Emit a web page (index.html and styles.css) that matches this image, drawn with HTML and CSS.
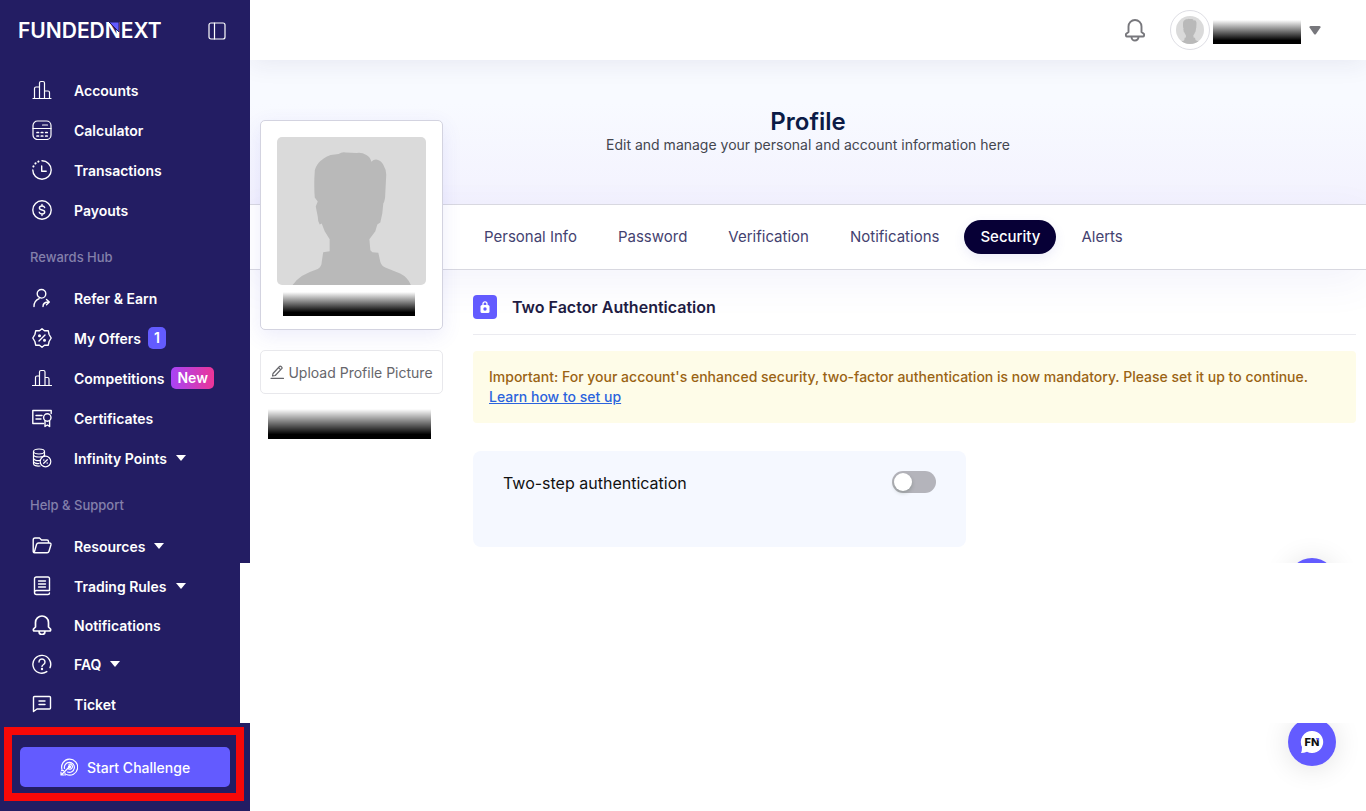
FILE: index.html
```
<!DOCTYPE html>
<html lang="en">

<head>
    <meta charset="UTF-8">
    <meta name="viewport" content="width=device-width, initial-scale=1.0">
    <title>Profile - FundedNext</title>
    <link rel="stylesheet" href="styles.css">
</head>

<body>

    <div class="layout">
        <aside class="sidebar">
            <div class="brand">
                <a href="#" class="logo">
                    <svg width="148" height="28" viewBox="0 0 148 28">
                        <text x="0" y="21" class="logo-text">FUNDEDNEXT</text>
                        <path d="M91 5h10v10z" fill="#635bff" stroke="#231d63" stroke-width="1" />
                    </svg>
                </a>
                <button class="collapse" aria-label="Collapse menu">
                    <svg width="18" height="18" viewBox="0 0 18 18" class="icon thin"><rect x="1" y="1" width="16" height="16" rx="2" /><path d="M6.500 1v16" /></svg>
                </button>
            </div>

            <nav class="menu">
                <a href="#" class="menu-item">
                    <svg class="icon thin" viewBox="0 0 20 20"><path d="M1 18.500h18M2.500 18.500V8.500q0-1.500 1.500-1.500h3.500M7.500 18.500V3q0-1.500 1.500-1.500h2q1.500 0 1.500 1.500v15.500M12.500 11H16q1.500 0 1.500 1.500v6" /></svg>
                    <span>Accounts</span>
                </a>
                <a href="#" class="menu-item">
                    <svg class="icon thin" viewBox="0 0 20 20"><rect x="1" y="1" width="18" height="18.500" rx="4.500" /><path d="M1 8.500h18M10.500 5h5" /><path d="M5 12.500h1.500M9.300 12.500h1.500M13.700 12.500h1.500M5 16h1.500M9.300 16h1.500M13.700 16h1.500" stroke-width="1.700" /></svg>
                    <span>Calculator</span>
                </a>
                <a href="#" class="menu-item">
                    <svg class="icon" viewBox="0 0 20 20"><path d="M10 .8a9.200 9.200 0 1 1-9.200 9.200M9.700 6v5.300h4.500" /><path d="M1.400 6.500l.1-.2M3.400 3.500l.2-.2M6.300 1.600l.2-.1" stroke-width="2" /></svg>
                    <span>Transactions</span>
                </a>
                <a href="#" class="menu-item">
                    <svg class="icon" viewBox="0 0 20 20"><circle cx="10" cy="10" r="9.200" /><path d="M12.700 7.600C12.300 6.300 11.300 6 10 6 8.500 6 7.400 6.700 7.400 7.900c0 2.900 5.300 1.200 5.300 4.100 0 1.300-1.200 2-2.700 2-1.400 0-2.500-.5-2.800-1.800M10 4.500V6M10 14v1.500" /></svg>
                    <span>Payouts</span>
                </a>

                <h2 class="menu-title">Rewards Hub</h2>
                <a href="#" class="menu-item">
                    <svg class="icon" viewBox="0 0 20 20"><circle cx="9.500" cy="5.800" r="4.300" /><path d="M2 18.500c0-4 1.800-6.500 5.200-7.800M11 18.500c0-3 1.500-4.500 6-4.500M14.500 11.500L17.300 14l-2.800 2.700" /></svg>
                    <span>Refer &amp; Earn</span>
                </a>
                <a href="#" class="menu-item">
                    <svg class="icon" viewBox="0 0 20 20"><path d="M10 .8l2.500 2h3.800l.8 3.700L19.200 10l-2.100 3.500-.8 3.700h-3.800l-2.500 2-2.500-2H3.700l-.8-3.700L.8 10l2.100-3.500.8-3.700h3.800z" /><path d="M13 7l-6 6" /><circle cx="7.500" cy="7.700" r=".8" /><circle cx="12.500" cy="12.300" r=".8" /></svg>
                    <span>My Offers</span>
                    <span class="badge">1</span>
                </a>
                <a href="#" class="menu-item">
                    <svg class="icon thin" viewBox="0 0 20 20"><path d="M.5 17.500h19M3.500 17.500V9.500q0-1.500 1.500-1.500h2.500M7.500 17.500V4q0-1.500 1.500-1.500h2.500q1.500 0 1.500 1.500v13.500M13 9.500h2.500q1.500 0 1.500 1.500v6.500" /></svg>
                    <span>Competitions</span>
                    <span class="badge badge-new">New</span>
                </a>
                <a href="#" class="menu-item">
                    <svg class="icon" viewBox="0 0 20 20"><path d="M11.500 15.500H.8v-13h18.400v3M4 7.500h6M4 11h5" /><circle cx="15.300" cy="9.500" r="3.700" /><path d="M13 12.800v5.700l2.300-1.500 2.300 1.500v-5.700" /></svg>
                    <span>Certificates</span>
                </a>
                <a href="#" class="menu-item">
                    <svg class="icon thin" viewBox="0 0 20 20"><ellipse cx="7" cy="3.500" rx="5.500" ry="2.500" /><path d="M1.500 3.500v3c0 3.300 11 3.300 11 0v-3M1.500 6.500v3.500c0 2.500 4 3 6.500 2.400M12.500 6.500V8M1.500 10v3c0 2 3 2.800 5.500 2.500M1.500 13v2.500c0 2 3 3 6.500 2.500" /><circle cx="13.500" cy="13.500" r="5.300" /><path d="M15.300 11.700l-3.600 3.600M11.800 11.800v.4M15.200 14.800v.4" stroke-width="1.300" /></svg>
                    <span>Infinity Points</span>
                    <i class="caret"></i>
                </a>

                <h2 class="menu-title">Help &amp; Support</h2>
                <a href="#" class="menu-item">
                    <svg class="icon" viewBox="0 0 20 20"><path d="M16.500 7V5.500q0-1.500-1.500-1.500H9.500L7.500 2H3Q1.200 2 1.200 4v11.500q0 1.300 1.300 1.300h12.700q1.300 0 1.700-1.300l2-6.500q.4-2-1.400-2H6.500Q5 7 4.500 8.500l-2.300 8" /></svg>
                    <span>Resources</span>
                    <i class="caret"></i>
                </a>
                <a href="#" class="menu-item">
                    <svg class="icon" viewBox="0 0 20 20"><path d="M17.500 14.500V2.500q0-1.500-1.500-1.500H4.500Q2.500 1 2.500 3v13.500M17.500 14.500h-13a2 2 0 0 0 0 4h11.500q1.500 0 1.500-1.500M6.500 5h7M6.500 8h7M6.500 11h7" /></svg>
                    <span>Trading Rules</span>
                    <i class="caret"></i>
                </a>
                <a href="#" class="menu-item menu-item-short">
                    <svg class="icon bold" viewBox="0 0 20 20"><path d="M3.500 12V7.500a6.500 6.500 0 0 1 13 0V12l2 2q.5 2-1 2h-15q-1.500 0-1-2zM7 16.500a3 3 0 0 0 6 0" /></svg>
                    <span>Notifications</span>
                </a>
                <a href="#" class="menu-item">
                    <svg class="icon" viewBox="0 0 20 20"><path d="M14.800 17.600A8.900 8.900 0 1 1 18 13.700M7 8a3 3 0 1 1 4.600 2.500Q10 11.500 10 12.500" /><circle cx="10" cy="15" r=".5" /></svg>
                    <span>FAQ</span>
                    <i class="caret"></i>
                </a>
                <a href="#" class="menu-item">
                    <svg class="icon" viewBox="0 0 20 20"><path d="M1.500 17.500V3.500q0-1 1-1h15q1 0 1 1v10.500q0 1-1 1H5zM7 7h6M7 10.500h6" /></svg>
                    <span>Ticket</span>
                </a>
            </nav>

            <div class="start">
                <button class="btn-start">
                    <svg width="18" height="18" viewBox="0 0 18 18" class="icon thin"><path d="M2 11.500A8 8 0 1 1 6.500 16.500M4.500 10.500a5 5 0 1 1 3 3.500M9 6.300a2.500 2.500 0 1 1-1 4" /><path d="M9.700 8.500l-8 8M1 14v3h3M1.500 12.500l2 .2M5 15l.3 2" /><circle cx="9.500" cy="8.700" r="1" fill="#fff" /></svg>
                    Start Challenge
                </button>
            </div>
        </aside>

        <div class="page">
            <header class="topbar">
                <button class="bell" aria-label="Notifications">
                    <svg width="22" height="24" viewBox="0 0 22 24" class="icon"><path d="M4.500 14V8.500a6.500 6.500 0 0 1 13 0V14l2.500 2q.5 2.500-1 2.500H3q-1.500 0-1-2.500zM7.500 19a3.500 3.500 0 0 0 7 0" /></svg>
                </button>
                <button class="account" aria-label="Account">
                    <span class="account-pic">
                        <svg width="28" height="28" viewBox="0 0 150 150"><use href="#person" /></svg>
                    </span>
                    <span class="redacted redacted-top"></span>
                    <svg width="12" height="9" viewBox="0 0 12 9"><path d="M1.500 0h9q1.500 0 1 1.500L7 8q-1 1-2 0L.5 1.500Q0 0 1.500 0z" fill="#77777c" /></svg>
                </button>
            </header>

            <main>
                <section class="hero">
                    <h1>Profile</h1>
                    <p>Edit and manage your personal and account information here</p>
                </section>

                <nav class="tabs">
                    <a href="#">Personal Info</a>
                    <a href="#">Password</a>
                    <a href="#">Verification</a>
                    <a href="#">Notifications</a>
                    <a href="#" class="active">Security</a>
                    <a href="#">Alerts</a>
                </nav>

                <div class="content">
                    <div class="profile">
                        <div class="profile-card">
                            <svg class="profile-pic" viewBox="0 0 150 149">
                                <g id="person">
                                    <rect width="150" height="150" fill="#dadada" />
                                    <path d="M15 150q4-6 10-10 7-4 16-7 4-3 4-7l1.500-10 6.500-1v-12l-5-8-3-8-2 1q-2-3-2-8l-2-10 2-5-3-4q-1-14 0-26 0-4 4-9 4-5 12-8l8-1q3-2 7-1.500l11 .5q5-1 10 2 4 2 5 7 3-3 6-2 4 1 6 5 3 5 3 10l-1 19q0 7-2 10l-1 10-2 9-3 2-2 7-6 8 1 11 2 2 6 .5 2 9q1 4 5 6l15 6q8 4 11 12z" fill="#b9b9b9" />
                                </g>
                            </svg>
                            <span class="redacted redacted-name"></span>
                        </div>
                        <button class="btn-upload">
                            <svg width="14" height="14" viewBox="0 0 14 14" class="icon thin"><path d="M1 13.300h12.500M3 8.500L9.500 1.500q.8-.8 1.600 0l.6.600q.8.800 0 1.600L5.300 10.500l-2.800.5zM8.500 2.700l2 2" /></svg>
                            Upload Profile Picture
                        </button>
                        <span class="redacted redacted-mail"></span>
                    </div>

                    <section class="security">
                        <h2 class="section-title">
                            <span class="section-icon">
                                <svg width="12" height="14" viewBox="0 0 12 14"><path d="M4 6V3.800a2 2 0 0 1 4 0V6" fill="none" stroke="#fff" stroke-width="1.300" /><rect x="1.500" y="5" width="9" height="8" rx="1.500" fill="#fff" /><circle cx="6" cy="9" r="1.700" fill="#635bff" /></svg>
                            </span>
                            Two Factor Authentication
                        </h2>

                        <div class="alert">
                            Important: For your account's enhanced security, two-factor authentication is now mandatory. Please set it up to continue.<br>
                            <a href="#">Learn how to set up</a>
                        </div>

                        <div class="two-step">
                            <label for="two-step">Two-step authentication</label>
                            <input type="checkbox" id="two-step" class="switch" role="switch">
                        </div>
                    </section>
                </div>
            </main>
        </div>

        <!-- chat bubbles, partly hidden by the blank strip -->
        <span class="chat chat-back"></span>
        <button class="chat" aria-label="Open chat">
            <svg width="24" height="24" viewBox="0 0 24 24">
                <path d="M12 1a11 11 0 1 1-5 20.700Q4 23 1 23 2 21 2 17A11 11 0 0 1 12 1z" fill="#fff" />
                <text x="12" y="16" class="chat-text">FN</text>
                <path d="M15.500 8h3.500v3.500z" fill="#635bff" />
            </svg>
        </button>
        <div class="blank-strip"></div>
    </div>

</body>

</html>
```
FILE: styles.css
```
* {
    box-sizing: border-box;
}

body {
    margin: 0;
    font-family: Inter, "Liberation Sans", sans-serif;
    font-size: 14px;
    color: #1e1b3a;
    background: #fff;
}

a {
    color: inherit;
    text-decoration: none;
}

button {
    font: inherit;
    color: inherit;
    background: none;
    border: 0;
    padding: 0;
    cursor: pointer;
}

h1,
h2,
p {
    margin: 0;
}

.layout {
    position: relative;
    display: flex;
    min-height: 100vh;
}

.icon {
    fill: none;
    stroke: currentColor;
    stroke-width: 1.4;
    stroke-linecap: round;
    stroke-linejoin: round;
    flex: none;
}

.icon.thin {
    stroke-width: 1.2;
}

.icon.bold {
    stroke-width: 1.7;
}

/* sidebar */
.sidebar {
    flex: none;
    width: 250px;
    display: flex;
    flex-direction: column;
    background: #231d63;
    color: #fff;
}

.brand {
    display: flex;
    align-items: center;
    justify-content: space-between;
    height: 62px;
    padding: 0 24px 0 18px;
}

.logo svg,
.collapse svg {
    display: block;
}

.logo-text {
    font-size: 21px;
    font-weight: 600;
    fill: #fff;
}

.menu {
    padding-top: 8px;
}

.menu-item {
    display: flex;
    align-items: center;
    height: 40px;
    padding-left: 32px;
    font-weight: 600;
}

.menu-item-short {
    height: 38px;
}

.menu-item .icon {
    width: 20px;
    height: 20px;
    margin-right: 22px;
}

.menu-title {
    height: 48px;
    padding: 0 30px;
    font-size: 13px;
    font-weight: 500;
    line-height: 54px;
    color: #8480ab;
}

.badge {
    height: 22px;
    margin-left: 7px;
    padding: 0 6px;
    border-radius: 5px;
    line-height: 22px;
    background: #635bff;
}

.badge-new {
    background: linear-gradient(90deg, #a844f7, #ec3597);
}

.caret {
    margin-left: 9px;
    border: 5px solid transparent;
    border-top: 6px solid #fff;
    border-bottom: 0;
}

.start {
    margin: 3px 6px 10px 4px;
    padding: 12px 6px 6px 8px;
    border: 8px solid #f90808;
}

.btn-start {
    display: flex;
    align-items: center;
    justify-content: center;
    gap: 9px;
    width: 100%;
    height: 40px;
    border-radius: 5px;
    font-weight: 500;
    background: #635bff;
}

/* top bar */
.page {
    position: relative;
    flex: 1;
    min-width: 0;
    overflow: hidden;
}

.topbar {
    position: relative;
    display: flex;
    align-items: center;
    justify-content: flex-end;
    gap: 24px;
    height: 60px;
    padding-right: 45px;
    background: #fff;
    box-shadow: 0 4px 24px rgba(40, 40, 90, 0.08);
}

.bell {
    color: #77777c;
}

.bell svg {
    display: block;
    stroke-width: 1.9;
}

.account {
    display: flex;
    align-items: center;
}

.account-pic {
    display: flex;
    align-items: center;
    justify-content: center;
    width: 40px;
    height: 40px;
    margin-right: 3px;
    border: 1px solid #dedee4;
    border-radius: 50%;
}

.account-pic svg {
    border-radius: 50%;
}

.redacted {
    display: block;
    background: linear-gradient(#fff, #000 85%);
}

.redacted-top {
    width: 88px;
    height: 24px;
    margin: 4px 8px 0 0;
}

/* profile head and tabs */
.hero {
    height: 144px;
    padding-top: 47px;
    text-align: center;
    background: linear-gradient(#f8faff 30%, #f3f2fe);
}

.hero h1 {
    font-size: 24px;
    font-weight: 600;
    line-height: 30px;
    color: #0b1b46;
}

.hero p {
    line-height: 16px;
    color: #44464f;
}

.tabs {
    display: flex;
    align-items: center;
    gap: 9px;
    height: 66px;
    padding-left: 218px;
    border: 1px solid #d8d8e0;
    border-width: 1px 0;
    background: #fff;
    box-shadow: 0 12px 40px rgba(80, 90, 200, 0.07);
}

.tabs a {
    padding: 0 16px;
    border-radius: 17px;
    font-size: 15px;
    line-height: 34px;
    color: #444270;
}

.tabs .active {
    font-weight: 500;
    color: #fff;
    background: #070036;
    box-shadow: 0 4px 12px rgba(80, 80, 200, 0.1);
}

.content {
    display: grid;
    grid-template-columns: 183px 1fr;
    align-items: start;
    gap: 30px;
    padding: 0 10px;
}

/* profile card, pulled up over the tabs */
.profile {
    position: relative;
    margin-top: -150px;
}

.profile-card {
    height: 210px;
    padding: 16px;
    border: 1px solid #d3d3e0;
    border-radius: 5px;
    background: #fff;
    box-shadow: 0 6px 20px rgba(80, 80, 220, 0.1);
}

.profile-pic {
    display: block;
    width: 100%;
    border-radius: 5px;
}

.redacted-name {
    width: 132px;
    height: 24px;
    margin: 7px 6px 0;
}

.btn-upload {
    display: flex;
    align-items: center;
    justify-content: center;
    gap: 4px;
    width: 100%;
    height: 44px;
    margin-top: 20px;
    border: 1px solid #e8e8ec;
    border-radius: 5px;
    white-space: nowrap;
    color: #66666b;
    background: #fff;
}

.redacted-mail {
    width: 163px;
    height: 30px;
    margin: 15px 8px 0;
}

/* security */
.section-title {
    display: flex;
    align-items: center;
    gap: 15px;
    height: 65px;
    padding-top: 10px;
    border-bottom: 1px solid #ebebf0;
    font-size: 16px;
    font-weight: 600;
    color: #1f1c43;
}

.section-icon {
    display: flex;
    align-items: center;
    justify-content: center;
    width: 24px;
    height: 24px;
    border-radius: 4px;
    background: #635bff;
}

.alert {
    margin-top: 16px;
    padding: 16px;
    border-radius: 4px;
    font-weight: 500;
    line-height: 20px;
    color: #9a6314;
    background: #fefce8;
}

.alert a {
    color: #2b63dd;
    text-decoration: underline;
}

.two-step {
    display: flex;
    align-items: flex-start;
    justify-content: space-between;
    max-width: 493px;
    min-height: 96px;
    margin-top: 28px;
    padding: 20px 30px;
    border-radius: 8px;
    font-size: 16px;
    line-height: 24px;
    color: #111;
    background: #f5f8ff;
}

.switch {
    appearance: none;
    width: 44px;
    height: 22px;
    margin: 0;
    padding: 2px;
    border-radius: 11px;
    background: #b4b4bb;
    cursor: pointer;
}

.switch::before {
    content: "";
    display: block;
    width: 18px;
    height: 18px;
    border-radius: 50%;
    background: #fff;
    box-shadow: 0 2px 4px rgba(0, 35, 11, 0.2);
}

.switch:checked {
    background: #635bff;
}

.switch:checked::before {
    margin-left: 22px;
}

/* chat */
.chat {
    position: absolute;
    top: 718px;
    right: 30px;
    display: flex;
    align-items: center;
    justify-content: center;
    width: 48px;
    height: 48px;
    border-radius: 50%;
    background: #635bff;
    box-shadow: 0 2px 28px rgba(0, 0, 0, 0.12);
}

.chat-back {
    top: 558px;
}

.chat-text {
    font-size: 11px;
    font-weight: 800;
    text-anchor: middle;
    fill: #111;
}

.blank-strip {
    position: absolute;
    top: 563px;
    left: 240px;
    right: 0;
    height: 160px;
    background: #fff;
}
```
